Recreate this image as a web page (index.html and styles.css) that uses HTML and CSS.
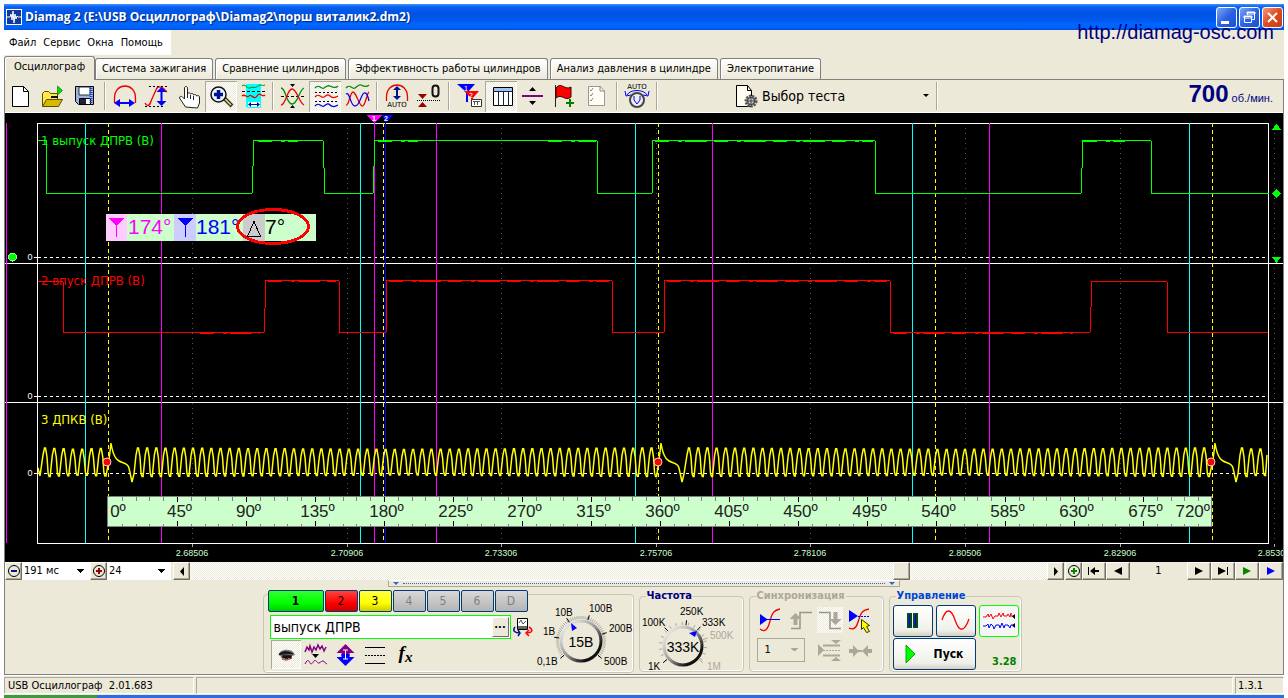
FILE: index.html
```html
<!DOCTYPE html>
<html lang="ru">
<head>
<meta charset="utf-8">
<title>Diamag 2</title>
<link rel="stylesheet" href="styles.css">
</head>
<body>
<div class="app">
  <header class="titlebar">
    <svg class="logo" width="16" height="16" viewBox="0 0 16 16"><rect width="16" height="16" fill="#fff"/><rect x="1" y="1" width="14" height="14" fill="#123a9c"/><path d="M1 8h3l1-3 1 6 1-9 1 12 1-9 1 5 1-3 1 1h3" fill="none" stroke="#fff"/></svg>
    <h1 class="title">Diamag 2 (E:\USB Осциллограф\Diamag2\порш виталик2.dm2)</h1>
    <div class="winbtns">
      <button class="winbtn" aria-label="Свернуть"><svg width="19" height="19" viewBox="0 0 19 19"><path d="M4 13h8v3H4z" fill="#fff"/></svg></button>
      <button class="winbtn" aria-label="Восстановить"><svg width="19" height="19" viewBox="0 0 19 19"><path d="M7.500 7V4.500h7v7H12M7 4h8v2H7zM4.500 8.500h7v6h-7zM4 8h8v2H4z" fill="none" stroke="#fff"/></svg></button>
      <button class="winbtn close" aria-label="Закрыть"><svg width="19" height="19" viewBox="0 0 19 19"><path d="M5 5l9 9M14 5l-9 9" stroke="#fff" stroke-width="2"/></svg></button>
    </div>
    <a class="site" href="#site">http://diamag-osc.com</a>
  </header>
  <nav class="menubar">
    <button class="menu">Файл</button><button class="menu">Сервис</button><button class="menu">Окна</button><button class="menu">Помощь</button>
  </nav>
  <div class="tabs" role="tablist">
    <button class="tab active" role="tab" aria-selected="true">Осциллограф</button>
    <button class="tab" role="tab">Система зажигания</button>
    <button class="tab" role="tab">Сравнение цилиндров</button>
    <button class="tab" role="tab">Эффективность работы цилиндров</button>
    <button class="tab" role="tab">Анализ давления в цилиндре</button>
    <button class="tab" role="tab">Электропитание</button>
  </div>
  <main class="page">
    <div class="toolbar">
      <button class="tool" aria-label="Новый"><svg viewBox="5 81 32 30"><path d="M12.500 86.500h11l5 5v15h-16z" fill="#fff" stroke="#000"/><path d="M23.500 86.500v5h5" fill="none" stroke="#000"/></svg></button>
      <button class="tool" aria-label="Открыть"><svg viewBox="37 81 32 30"><path d="M42.500 106v-12.500l2-2h4l2 2h7v12.500z" fill="#ffe94a" stroke="#5a5000"/><path d="M42.500 106.500l4-7h16l-4 7z" fill="#d8b800" stroke="#5a5000"/><path d="M51 96h7v2h-7z" fill="#111"/><path d="M57.500 86v9l5-4.500z" fill="#00e000" stroke="#006000" stroke-width=".6"/></svg></button>
      <button class="tool" aria-label="Сохранить"><svg viewBox="69 81 32 30"><path d="M75.500 86.500h18v18h-15l-3-3z" fill="#9db4dd" stroke="#000"/><path d="M79 87h11v8H79z" fill="#fff" stroke="#234"/><path d="M79.500 98.500h11v6h-11z" fill="#223" stroke="#000"/><path d="M86 99h4v5h-4z" fill="#fff"/><path d="M91 88v15" stroke="#24c" stroke-dasharray="1 1" stroke-width="3"/></svg></button>
      <span class="sep"></span>
      <button class="tool" aria-label="Развёртка"><svg viewBox="109 81 32 30"><path d="M114.500 103v-5c0-16 21-16 21 0v5" fill="none" stroke="#e00" stroke-width="1.300"/><path d="M114 103l6-4v3h9v-3l6 4-6 4v-3h-9v3z" fill="#00f"/></svg></button>
      <button class="tool" aria-label="Амплитуда"><svg viewBox="141 81 32 30"><path d="M149 86.500h18M145 106.500h20" stroke="#000" stroke-dasharray="2 2"/><path d="M145 103c2 4 5 3 6-2l5-11c1-4 5-4 8-1l3 3" fill="none" stroke="#e00" stroke-width="1.300"/><path d="M161.500 87l5 5h-4v9h4l-5 5-5-5h4v-9h-4z" fill="#00f"/></svg></button>
      <button class="tool" aria-label="Рука"><svg viewBox="173 81 32 30"><path d="M185.500 107l-6-9c0-2 2-2 3-1l2 2v-11c0-2 3-2 3 0v6c1-2 3-1 3 0 2-1 3 0 3 1 2-1 3 0 3 1 2-1 3 0 3 1v6l-2 5z" fill="#fff" stroke="#222"/><path d="M187.500 94v4M190.500 95v4M193.500 96v4" stroke="#222"/></svg></button>
      <button class="tool pressed" aria-label="Лупа"><svg viewBox="205 81 32 30"><path d="M223 97l9 9" stroke="#333" stroke-width="4"/><path d="M223 97l8 8" stroke="#ffe060" stroke-width="1.500"/><circle cx="218.500" cy="94.500" r="7.500" fill="#eef4ff" stroke="#111" stroke-width="1.500"/><path d="M214 94.500h9M218.500 90v9" stroke="#00138f" stroke-width="3.500"/></svg></button>
      <button class="tool" aria-label="Область"><svg viewBox="237 81 32 30"><path d="M246 84h15v23h-15z" fill="#0ff"/><path d="M247.500 101.500h13v6h-13z" fill="#fff" stroke="#0ff"/><path d="M242 86c3-3 5 3 8 2l3-1c3 2 5-2 7-2s3 1 5 0" fill="none" stroke="#080"/><path d="M242 91.500h23" stroke="#000" stroke-dasharray="3 2"/><path d="M242 96c3-3 5 3 7 0s5 5 8 0 5 2 8-1" fill="none" stroke="#e00" stroke-width="1.300"/><path d="M248 104.500l3-2.500v2h6v-2l3 2.500-3 2.500v-2h-6v2z" fill="#00138f"/></svg></button>
      <span class="sep"></span>
      <button class="tool" aria-label="Перекрытие"><svg viewBox="277 81 32 30"><path d="M281 96.500h23" stroke="#000" stroke-dasharray="3 2"/><path d="M281 88c5 0 5 16 11 16s7-14 12-16" fill="none" stroke="#080" stroke-width="1.300"/><path d="M281 105c5 0 6-16 11-16s7 14 12 16" fill="none" stroke="#e00" stroke-width="1.300"/><path d="M290 84h5l-2.500 3zM290 108h5l-2.500-3z"/></svg></button>
      <button class="tool pressed" aria-label="Раздельно"><svg viewBox="309 81 32 30"><path d="M315 88c4-5 6 2 9 0s4-3 6-2 5 3 8 0" fill="none" stroke="#080" stroke-width="1.300"/><path d="M315 92.500h23M315 101.500h23" stroke="#000" stroke-dasharray="2 2"/><path d="M315 97c4-5 6 2 9 0s4-3 6-1 5 2 8 0" fill="none" stroke="#e00" stroke-width="1.300"/><path d="M315 106c4-5 6 2 9 0s4-3 6-1 5 2 8 0" fill="none" stroke="#00e" stroke-width="1.300"/></svg></button>
      <button class="tool" aria-label="Наложить"><svg viewBox="341 81 32 30"><path d="M346 88c4-5 6 2 9 0s4-4 6-3 5 3 8 0" fill="none" stroke="#080" stroke-width="1.300"/><path d="M346 105c3 1 4-13 7-13s6 13 9 14 5-13 7-14" fill="none" stroke="#e00" stroke-width="1.300"/><path d="M346 94c4-3 4 12 9 12s6-12 9-13 4 4 5 8" fill="none" stroke="#00e" stroke-width="1.300"/></svg></button>
      <span class="sep"></span>
      <button class="tool" aria-label="Авто"><svg viewBox="381 81 32 30"><path d="M386.500 101v-4c0-16 21-16 21 0v4" fill="none" stroke="#e00" stroke-width="1.300"/><path d="M397 86l4 4h-3v6h3l-4 4-4-4h3v-6h-3z" fill="#00138f"/><text x="397" y="107" class="mini" text-anchor="middle">AUTO</text></svg></button>
      <button class="tool" aria-label="Ноль"><svg viewBox="413 81 32 30"><path d="M418 94h9l-4.500 5zM418 107h9l-4.500-5z" fill="#900"/><path d="M417 100.500h23" stroke="#000" stroke-dasharray="1 1"/><rect x="432.500" y="85.500" width="6" height="11" rx="3" fill="none" stroke="#111" stroke-width="2"/></svg></button>
      <span class="sep"></span>
      <button class="tool" aria-label="Маркеры"><svg viewBox="453 81 32 30"><path d="M457 84h18l-7 8v10h-2v-10z" fill="#00f"/><path d="M464 91h15l-6 7v5h-2v-5z" fill="#f00"/><text x="466" y="91" class="mini light" text-anchor="middle">1</text><text x="471" y="98" class="mini light" text-anchor="middle">2</text><path d="M471.500 99.500h10v7h-10z" fill="#fff" stroke="#333"/><path d="M473 101.500h7M474.500 101v4M477.500 101v4" stroke="#555"/></svg></button>
      <button class="tool pressed" aria-label="Таблица"><svg viewBox="485 81 32 30"><path d="M493.500 87.500h19v18h-19z" fill="#fff" stroke="#000"/><path d="M494 88h18v3h-18z" fill="#a0c4f0"/><path d="M493 91.500h20M498.500 92v14M503.500 92v14M508.500 92v14" stroke="#123"/></svg></button>
      <button class="tool" aria-label="Разделить"><svg viewBox="517 81 32 30"><path d="M522 96h21" stroke="#800080" stroke-width="2"/><path d="M529 91h7l-3.500-4zM529 101h7l-3.500 4z"/></svg></button>
      <button class="tool" aria-label="Флаг"><svg viewBox="549 81 32 30"><path d="M555.500 85v22" stroke="#222"/><path d="M556 88c5-7 9 3 15-1v10c-6 5-9-4-15 1z" fill="#f00" stroke="#400"/><path d="M566 103h8M570 99v8" stroke="#008000" stroke-width="2"/></svg></button>
      <button class="tool" aria-label="Список"><svg viewBox="581 81 32 30"><path d="M588.500 86.500h12l4 5v14h-16z" fill="#fffdf4" stroke="#999"/><path d="M600 86v5h5M590 90l1 1 2-3M590 95l1 1 2-3M590 100l1 1 2-3" fill="none" stroke="#888"/></svg></button>
      <span class="sep"></span>
      <button class="tool" aria-label="Авто напряжение"><svg viewBox="621 81 32 30"><text x="637" y="89" class="mini" text-anchor="middle">AUTO</text><path d="M627 95c3-6 17-6 20 0M625 91l1 5 5-1M649 91l-1 5-5-1" fill="none" stroke="#00f"/><circle cx="637" cy="100" r="7" fill="#eee" stroke="#444" stroke-width="2"/><path d="M634 96v4l3 4 3-4v-4" fill="none" stroke="#00f"/></svg></button>
      <span class="sep"></span>
      <label class="testpick">
        <svg width="26" height="30" viewBox="734 81 26 30"><path d="M737.500 85.500h11l4 5v16h-15z" fill="#fffdf0" stroke="#000"/><path d="M748.500 85.500v5h4" fill="none" stroke="#000"/><circle cx="752" cy="101" r="5" fill="#aaa" stroke="#555" stroke-width="3" stroke-dasharray="2 1"/><circle cx="752" cy="101" r="3.500" fill="#ccc" stroke="#333"/><path d="M748 101h8M752 97v8" stroke="#444"/></svg>
        <select class="picklist" aria-label="Выбор теста"><option>Выбор теста</option></select>
        <svg width="7" height="4" viewBox="0 0 7 4"><path d="M1 0h6L4 3z"/></svg>
      </label>
      <span class="sep"></span>
      <output class="rpm"><b>700</b> об./мин.</output>
    </div>

    <svg class="scope" viewBox="5 113 1278 449" role="img" aria-label="Осциллограмма">
      <g id="grid"></g>
      <path d="M38 257.500H1268M38 396.500H1268M38 473.500H1268" stroke="#fff" stroke-dasharray="3 3"/>
      <g stroke="#fff" fill="none"><path d="M37.500 543.500v-420h1231v420zM5 263.500h1278M5 402.500h1278M34 257.500h4M34 396.500h4M34 473.500h4"/></g>
      <g id="verticals"></g>
      <g class="wave">
        <path stroke="#0f0" d="M38 140.500h8v53h206l1-27 1-26h69l1 27 1 26h48l1-27 1-26h222l1 53h54l1-53h222l1 53h205l1-25 1-28h68l1 53h117"/>
        <path stroke="#0f0" stroke-dasharray="14 9 4 3 22 7" d="M258 141.500h40M378 141.500h40M548 141.500h48M655 141.500h218M1083 141.500h42"/>
        <path stroke="red" d="M38 281.500h25l1 51h200l1-24 1-28h73l1 52h46l1-52h225l1 52h51l1-52h225l1 52h199l1-25 1-26h75l1 51h100"/>
        <path stroke="red" stroke-dasharray="14 9 4 3 22 7" d="M268 281.500h68M389 281.500h220M667 281.500h220M1094 281.500h60M200 333.500h60M893 333.500h180"/>
        <path id="crank" stroke="#ff0"/>
      </g>
      <g class="chname"><text x="41" y="145" fill="#0f0">1 выпуск ДПРВ (В)</text><text x="41" y="285" fill="red">2 впуск ДПРВ (В)</text><text x="41" y="424" fill="#ff0">3 ДПКВ (В)</text></g>
      <g class="axis"><text x="30" y="260">0</text><text x="30" y="399">0</text><text x="30" y="476">0</text></g>
      <g id="times" class="axis times"></g>
      <g class="dots" stroke="#fcc" fill="red"><circle cx="107" cy="462" r="4"/><circle cx="658" cy="462" r="4"/><circle cx="1211" cy="462" r="4"/></g>
      <g id="ruler"></g>
      <path d="M367 115h15l-7.500 8z" fill="#f0f"/><path d="M382 115h11l-7 8z" fill="#00f"/>
      <text x="374" y="121" class="flag">1</text><text x="386" y="121" class="flag">2</text>
      <g fill="#0f0"><path d="M1272 130h9l-4.500-6.500zM1276.500 189l4.500 4.500-4.500 4.500-4.500-4.500zM1272 257h9l-4.500 6z"/><circle cx="12.500" cy="257" r="4" stroke="#8f8"/></g>
      <path d="M106 214h210v27H106z" fill="#cfc"/>
      <path d="M106 214h21v27h-21z" fill="#fcf"/><path d="M174 214h22v27h-22z" fill="#ccf"/><path d="M243 214h22v27h-22z" fill="#ccc"/>
      <path d="M109 218h15l-7 8v11h-1v-11z" fill="#f0f"/><path d="M178 218h15l-7 8v11h-1v-11z" fill="#00f"/><path d="M247.500 236.500h13l-6.500-15z" fill="none" stroke="#000"/>
      <g class="measure"><text x="128" y="234" fill="#f0f">174°</text><text x="196" y="234" fill="#00f">181°</text><text x="265" y="234">7°</text></g>
      <ellipse cx="273" cy="226.500" rx="35.500" ry="17" fill="none" stroke="red" stroke-width="3"/>
    </svg>

    <div class="scroller">
      <button class="flat" aria-label="Сжать"><svg width="14" height="14" viewBox="0 0 14 14"><circle cx="7" cy="7" r="5.500" fill="none" stroke="#000"/><path d="M4 7h6" stroke="#00138f" stroke-width="2"/></svg></button>
      <select class="mini-select" aria-label="Время"><option>191 мс</option></select>
      <button class="flat" aria-label="Растянуть"><svg width="14" height="14" viewBox="0 0 14 14"><circle cx="7" cy="7" r="5.500" fill="none" stroke="#000"/><path d="M4 7h6M7 4v6" stroke="#900" stroke-width="2"/></svg></button>
      <select class="mini-select second" aria-label="Масштаб"><option>24</option></select>
      <button class="flat" aria-label="Влево"><svg width="8" height="9" viewBox="0 0 8 9"><path d="M6 0v9L2 4.500z"/></svg></button>
      <input class="track" type="range" min="0" max="1000" value="837" aria-label="Позиция">
      <button class="flat" aria-label="Вправо"><svg width="8" height="9" viewBox="0 0 8 9"><path d="M2 0v9l4-4.500z"/></svg></button>
      <button class="flat add" aria-label="Добавить"><svg width="14" height="14" viewBox="0 0 14 14"><circle cx="7" cy="7" r="5.500" fill="none" stroke="#000"/><path d="M4 7h6M7 4v6" stroke="#080" stroke-width="2"/></svg></button>
      <button class="nav" aria-label="В начало"><svg width="12" height="8" viewBox="0 0 12 8"><path d="M0 0h1v8H0zM2 4l5-4v3h4v2H7v3z"/></svg></button>
      <button class="nav" aria-label="Назад"><svg width="12" height="8" viewBox="0 0 12 8"><path d="M2 4l8-4v8z"/></svg></button>
      <output class="frame">1</output>
      <button class="nav" aria-label="Вперёд"><svg width="12" height="8" viewBox="0 0 12 8"><path d="M10 4L2 0v8z"/></svg></button>
      <button class="nav" aria-label="В конец"><svg width="12" height="8" viewBox="0 0 12 8"><path d="M9 4L1 0v8zM10 0h1v8h-1z"/></svg></button>
      <button class="nav" aria-label="Проиграть"><svg width="12" height="8" viewBox="0 0 12 8"><path d="M10 4L2 0v8z" fill="#080"/></svg></button>
      <button class="nav" aria-label="Проиграть всё"><svg width="12" height="8" viewBox="0 0 12 8"><path d="M10 4L2 0v8z" fill="#00f"/></svg></button>
    </div>

    <div class="panel">
      <div class="splitter"><i></i><span></span><i></i></div>
      <div class="groups">
        <section class="group input-group">
          <div class="channel">
            <div class="chbtns">
              <button class="ch ch1">1</button><button class="ch ch2">2</button><button class="ch ch3">3</button><button class="ch" disabled>4</button><button class="ch" disabled>5</button><button class="ch" disabled>6</button><button class="ch" disabled>D</button>
            </div>
            <div class="namerow">
              <div class="namebox"><input class="name" type="text" value="выпуск ДПРВ" aria-label="Имя канала"><button class="more" aria-label="Ещё">...</button></div>
              <button class="ico" aria-label="Заменить"><svg width="20" height="20" viewBox="512 616 20 20"><path d="M516.500 617.500h10v11h-10z" fill="#fff" stroke="#000"/><path d="M517 625h9v3h-9z" fill="#666"/><path d="M518 622l2-3 2 4 3-3" fill="none" stroke="#555"/><path d="M514 626c-3 4 0 6 5 6M517 629l2 3-2 3" fill="none" stroke="#00138f" stroke-width="1.500"/><path d="M528 626c5 3 3 6-3 6M528 629l-3 3 3 3" fill="none" stroke="red" stroke-width="1.500"/></svg></button>
            </div>
            <div class="icons">
              <button class="ico on" aria-label="Показать"><svg width="30" height="28" viewBox="270 640 30 28"><path d="M278 653c1-5 12-6 15-1l1 2-3 1c-2 6-9 6-11 1z" fill="#777"/><path d="M278 654c3-4 9-4 14-1M282 655h8v2h-8z" fill="#222" stroke="#111" stroke-width="1.300"/><path d="M281 658h3M287 658h2" stroke="#c66" stroke-width="2"/></svg></button>
              <button class="ico" aria-label="Фильтр"><svg width="30" height="28" viewBox="300 640 30 28"><path d="M304 651l2-5 2 3 1-4 2 6 2-5 2 3 2-5 2 4 2-3 2 5 2-4" fill="none" stroke="#800080" stroke-width="1.500"/><path d="M311 653h7l-3.500 4z"/><path d="M304 663c3-6 4-3 5-1s3 0 4-2 3 1 4 2 3-2 5-2 1 2 4 3" fill="none" stroke="#800080"/></svg></button>
              <button class="ico" aria-label="Инверсия"><svg width="30" height="28" viewBox="330 640 30 28"><path d="M344.500 643l9 9h-5v3h-8v-3h-5z" fill="#800080"/><path d="M344.500 665l9-9h-5v-3h-8v3h-5z" fill="#00f"/><path d="M342 649h5M344.500 649v9M342 658h5" stroke="#fff"/></svg></button>
              <button class="ico" aria-label="Уровни"><svg width="30" height="28" viewBox="360 640 30 28"><path d="M364 646.500h20M364 662.500h20" stroke="#000"/><path d="M364 654.500h20" stroke="#000" stroke-dasharray="2 1"/></svg></button>
              <button class="ico fx" aria-label="Формула"><i>f<sub>x</sub></i></button>
            </div>
          </div>
          <svg id="knobV" class="knob" width="98" height="76" viewBox="534 594 98 76"></svg>
        </section>
        <fieldset class="group freq"><legend>Частота</legend>
          <svg id="knobF" class="knob" width="98" height="70" viewBox="641 600 98 70"></svg>
        </fieldset>
        <fieldset class="group sync"><legend>Синхронизация</legend>
          <div class="syncrow">
            <button class="ico" aria-label="Уровень"><svg width="26" height="26" viewBox="757 606 26 26"><path d="M760 628c5 4 8 0 10-8s4-11 10-12" fill="none" stroke="#e00" stroke-width="1.300"/><path d="M760 613l7 5h13v1h-13l-7 5z" fill="#00f"/></svg></button>
            <button class="ico" aria-label="Фронт"><svg width="26" height="26" viewBox="787 606 26 26"><path d="M791 627.500h9v-16h12" fill="none" stroke="#999684" stroke-width="1.500"/><path d="M795.500 612l6 6h-4v6h-4v-6h-4z" fill="#aca899"/></svg></button>
            <button class="ico hatch" aria-label="Спад"><svg width="26" height="26" viewBox="818 606 26 26"><path d="M820 611.500h11v16h11" fill="none" stroke="#999684" stroke-width="1.500"/><path d="M836.500 624l-6-6h4v-7h4v7h4z" fill="#aca899"/></svg></button>
            <button class="ico" aria-label="Ручной"><svg width="26" height="26" viewBox="848 606 26 26"><path d="M850 627c6 3 8-2 10-9s4-9 10-10" fill="none" stroke="#e00" stroke-width="1.300"/><path d="M850 609l9 6-9 6z" fill="#00f"/><path d="M859 615.500h12" stroke="#00f" stroke-dasharray="2 1"/><path d="M862.500 618.500l8 6-3 1 3 5-3 1-3-5-2 2z" fill="#ff0" stroke="#330"/></svg></button>
          </div>
          <div class="syncrow lower">
            <select class="syncsel" disabled aria-label="Канал синхронизации"><option>1</option></select>
            <button class="ico" disabled aria-label="Гистерезис"><svg width="26" height="26" viewBox="815 639 26 26"><path d="M817 645l6 6-6 6zM830 641h10l-5 4zM830 662h10l-5-4z" fill="#aca899"/><path d="M822 646.500h17M822 656.500h17" stroke="#aca899" stroke-width="2"/><path d="M822 651.500h17" stroke="#aca899" stroke-dasharray="2 1"/></svg></button>
            <button class="ico" disabled aria-label="Центр"><svg width="26" height="26" viewBox="844 639 26 26"><path d="M846 650h4v-4l6 6-6 6v-4h-4zM869 650h-4v-4l-6 6 6 6v-4h4zM855 651h5v2h-5z" fill="#aca899"/></svg></button>
          </div>
        </fieldset>
        <fieldset class="group control"><legend>Управление</legend>
          <div class="ctlgrid">
            <button class="ctl" aria-label="Пауза"><svg width="14" height="18" viewBox="0 0 14 18"><path d="M2 2h3v13H2zM8 2h3v13H8z" fill="#00f" stroke="#064a20" stroke-width="2"/></svg></button>
            <button class="ctl" aria-label="Синус"><svg width="30" height="22" viewBox="0 0 30 22"><path d="M1 10C5-2 10-2 14 10s9 13 14-1" fill="none" stroke="red" stroke-width="1.300"/></svg></button>
            <button class="ctl sel" aria-label="Поток"><svg width="34" height="22" viewBox="0 0 34 22"><path d="M1 7h3l2-3 1 3 2-3 2 5 2-3h3l1-3 2 4 2-4 1 3h3l1-2 2 3 1-4v3h3" fill="none" stroke="red"/><path d="M1 16h3l2-2 1 4 2-4 2 2 1 3 2-4h3l1 3 2-5 2 5 1-3h3l2 3 1-3h4" fill="none" stroke="#00f"/><path d="M33 4v5l-3-2.500zM33 13v5l-3-2.500z" fill="#003"/></svg></button>
            <button class="ctl start"><svg width="11" height="20" viewBox="0 0 11 20"><path d="M1 1v18l9-9z" fill="#0f0" stroke="#0a0"/></svg>Пуск</button>
            <output class="speed">3.28</output>
          </div>
        </fieldset>
      </div>
    </div>
  </main>
  <footer class="status"><span class="cell dev">USB Осциллограф&nbsp; 2.01.683</span><span class="cell wide"></span><span class="cell ver">1.3.1</span></footer>
  <div class="taskbar"></div>
</div>
<script src="scope.js"></script>
</body>
</html>
```
FILE: styles.css
```css
* { box-sizing: border-box; }
body { margin: 0; padding: 4px 4px 0; background: #fff; font: 11px/14px "DejaVu Sans Condensed", "Open Sans", sans-serif; color: #000; }
button, select, input { font: inherit; color: inherit; margin: 0; padding: 0; border: 0; background: none; border-radius: 0; }
select { appearance: none; opacity: 1; }
svg { display: block; flex: none; }
.app { background: #ece9d8; }

.titlebar { position: relative; display: flex; align-items: center; height: 26px; padding: 0 1px 0 2px; gap: 3px; background: linear-gradient(#3a93ff, #0a5ef0 3px, #0054e3 10px, #0058ee 16px, #0066ff 20px, #0060f8 24px, #0050d8); }
.title { flex: 1; margin: 0; font: bold 12px/18px "Open Sans", sans-serif; color: #fff; text-shadow: 1px 1px 1px #002a80; white-space: nowrap; }
.winbtns { display: flex; gap: 2px; }
.winbtn { width: 21px; height: 21px; border: 1px solid #fff; border-radius: 3px; background: linear-gradient(135deg, #7fa8f8, #2c62e4 50%, #1a4fd0); }
.winbtn.close { background: linear-gradient(135deg, #f09a80, #e04a20 50%, #c83c10); }
.site { position: absolute; right: 10px; top: 16px; font: 20px/24px "Liberation Sans", Arial, sans-serif; color: #000080; text-decoration: none; }

.menubar { display: inline-flex; height: 25px; padding: 0 8px 0 5px; gap: 7px; background: #fff; vertical-align: top; }
.tabs { display: flex; align-items: flex-end; height: 25px; gap: 2px; border-bottom: 1px solid #808080; }
.tab { height: 21px; padding: 0 6px; border: 1px solid #808080; border-bottom: 0; border-radius: 3px 3px 0 0; background: linear-gradient(#fff, #ece9d8); box-shadow: inset 1px 1px #fff; white-space: nowrap; }
.tab.active { height: 24px; margin: 0 -2px -1px 0; padding: 0 9px 3px; background: #ece9d8; }

.page { border: solid #808080; border-width: 0 1px; }
.toolbar { display: flex; align-items: center; height: 33px; border-bottom: 1px solid #fff; }
.tool { flex: none; width: 32px; height: 31px; }
.tool svg { width: 32px; height: 30px; }
.pressed, .ico.on, .hatch { background: repeating-conic-gradient(#fff 0 25%, #ece9d8 0 50%) 0 0 / 2px 2px; }
.pressed, .ico.on { box-shadow: inset 1px 1px #aca899, inset -1px -1px #fff; }
.sep { flex: none; width: 2px; height: 28px; margin: 0 3px; border-left: 1px solid #aca899; border-right: 1px solid #fff; }
.mini { font: 7px "DejaVu Sans", sans-serif; }
.light { fill: #fff; }
.testpick { display: flex; align-items: center; width: 200px; margin-left: 72px; gap: 3px; padding-right: 4px; }
.picklist { flex: 1; font: 14px/18px "DejaVu Sans Condensed", sans-serif; }
.rpm { margin-left: auto; padding-right: 10px; font: 11px/24px "Liberation Sans", sans-serif; color: #000080; white-space: nowrap; }
.rpm b { font-size: 24px; }

.scope { width: 100%; height: auto; background: #000; shape-rendering: crispEdges; }
.wave path { fill: none; stroke-width: 1; }
#crank { stroke-width: 1.500; shape-rendering: auto; }
.dots { shape-rendering: auto; }
.chname { font: 13px "DejaVu Sans Condensed", sans-serif; }
.axis { font: 9px "Liberation Sans", sans-serif; fill: #fff; text-anchor: middle; }
.times { fill: #cfc; }
.flag { font: bold 7px "Liberation Sans", sans-serif; fill: #fff; text-anchor: middle; }
.measure { font: 21px "Liberation Sans", sans-serif; }
.degrees { font: 17px "Liberation Sans", sans-serif; fill: #222; text-anchor: middle; }
.degrees .last { text-anchor: end; }

.scroller { display: flex; height: 18px; }
.flat, .nav { display: flex; flex: none; align-items: center; justify-content: center; width: 17px; height: 18px; background: #ece9d8; border: 1px solid; border-color: #fff #716f64 #716f64 #fff; box-shadow: inset -1px -1px #aca899; }
.nav { width: 24px; }
.add { margin-left: 1px; }
.mini-select { width: 68px; padding: 0 2px; background: linear-gradient(#000, #000) right 6px top 7px / 7px 1px no-repeat, linear-gradient(#000, #000) right 7px top 8px / 5px 1px no-repeat, linear-gradient(#000, #000) right 8px top 9px / 3px 1px no-repeat, linear-gradient(#000, #000) right 9px top 10px / 1px 1px no-repeat, #fff; }
.second { width: 64px; margin-right: 2px; }
.track { flex: 1; min-width: 0; height: 18px; appearance: none; background: repeating-conic-gradient(#fff 0 25%, #ece9d8 0 50%) 0 0 / 2px 2px; }
.track::-webkit-slider-thumb { appearance: none; width: 17px; height: 18px; background: #ece9d8; border: 1px solid; border-color: #fff #716f64 #716f64 #fff; box-shadow: inset -1px -1px #aca899; }
.frame { width: 57px; text-align: center; line-height: 18px; }

.panel { padding-bottom: 1px; }
.splitter { display: flex; align-items: center; gap: 4px; width: 40%; height: 7px; margin: 0 auto; padding: 0 4px; border: 1px solid #aca899; border-top-color: #fff; }
.splitter span { flex: 1; border-top: 1px dotted #316ac5; }
.splitter i { border: solid transparent; border-width: 3px 3px 0; border-top-color: #316ac5; }
.groups { display: flex; justify-content: center; gap: 5px; margin-top: 2px; padding-right: 4px; }
.group { min-width: 0; height: 83px; margin: 0; padding: 0; border: 1px solid #c9c6b5; border-radius: 4px; box-shadow: inset -1px -1px #fff; }
.group legend { margin-left: 6px; padding: 0 1px; font: bold 11px/14px "DejaVu Sans Condensed", sans-serif; }
.input-group { display: flex; height: 79px; width: 371px; margin-top: 5px; }
.channel { width: 271px; margin-top: -5px; padding-left: 4px; }
.knob { flex: none; font: 10px "Liberation Sans", sans-serif; }
.knob .value { font-size: 14px; text-anchor: middle; }
.freq { width: 105px; }
.freq legend { color: #000080; }
.chbtns { display: flex; height: 22px; gap: 1px; }
.ch { width: 33px; height: 22px; border: 1px solid #003c74; border-radius: 2px; background: linear-gradient(#d8d8d8, #b4b4b4); font: 12px/18px "DejaVu Sans Condensed", sans-serif; }
.ch:disabled { color: #808080; }
.ch1 { width: 56px; background: linear-gradient(#3f3, #0f0 60%, #0c0); font-weight: bold; }
.ch2 { background: linear-gradient(#f44, #f00 60%, #c00); }
.ch3 { background: linear-gradient(#ff4, #ff0 60%, #cc0); }
.namerow { display: flex; align-items: center; gap: 2px; margin: 3px 0 1px 2px; }
.namebox { display: flex; width: 241px; height: 24px; padding: 1px; border: 1px solid #0f0; background: #fff; }
.name { flex: 1; min-width: 0; padding: 0 2px; font: 14px/18px "DejaVu Sans Condensed", sans-serif; outline: 0; }
.more { width: 17px; font-weight: bold; line-height: 12px; padding-bottom: 5px; background: #ece9d8; border: 1px solid; border-color: #fff #716f64 #716f64 #fff; }
.icons { display: flex; margin-left: 3px; }
.icons .ico { width: 30px; height: 29px; }
.fx { font: bold 19px/20px "Liberation Serif", serif; }
.fx sub { font-size: 15px; vertical-align: -3px; }
.sync { width: 135px; }
.sync legend { color: #aca899; }
.syncrow { display: flex; gap: 4px; margin: 4px 0 0 7px; }
.lower { gap: 5px; margin-top: 5px; }
.syncsel { width: 48px; height: 24px; margin-right: 6px; padding: 0 7px; border: 1px solid #aca899; background: linear-gradient(#aca899, #aca899) right 6px top 9px / 7px 1px no-repeat, linear-gradient(#aca899, #aca899) right 7px top 10px / 5px 1px no-repeat, linear-gradient(#aca899, #aca899) right 8px top 11px / 3px 1px no-repeat; }
.control { width: 133px; }
.control legend { color: #0046d5; }
.ctlgrid { display: grid; grid-template-columns: 40px 40px 40px; gap: 1px 3px; margin: 2px 0 0 3px; }
.ctl { display: flex; align-items: center; justify-content: center; height: 32px; border: 1px solid #003c74; border-radius: 3px; background: linear-gradient(#fff, #f0f0ea 80%, #d6d0c5); }
.ctl.sel { border-color: #0f0; background: #f6f6f6; }
.start { grid-column: span 2; gap: 18px; font: bold 12px/16px "DejaVu Sans Condensed", sans-serif; }
.speed { align-self: end; justify-self: end; padding: 0 2px 1px 0; font: bold 11px/14px "DejaVu Sans Condensed", sans-serif; color: #008000; }

.status { display: flex; gap: 2px; padding: 2px 0 1px; border-top: 1px solid #808080; box-shadow: inset 0 1px #fff; }
.cell { height: 17px; padding: 1px 3px; border: 1px solid; border-color: #aca899 #fff #fff #aca899; }
.dev { width: 190px; }
.wide { flex: 1; }
.ver { width: 49px; padding-left: 2px; }
.taskbar { height: 4px; background: linear-gradient(90deg, #3c9a3c 93px, #2a6ee0 93px); }
```
FILE: scope.js
```js
const NS = "http://www.w3.org/2000/svg";
function add(parent, tag, attrs, text) {
  const el = document.createElementNS(NS, tag);
  for (const k in attrs) el.setAttribute(k, attrs[k]);
  if (text !== undefined) el.textContent = text;
  parent.appendChild(el);
  return el;
}
const byId = id => document.getElementById(id);

// Time grid
const times = ["2.68506", "2.70906", "2.73306", "2.75706", "2.78106", "2.80506", "2.82906", "2.85306"];
times.forEach((t, i) => {
  const x = Math.round(192 + i * 154.6);
  add(byId("grid"), "path", { d: `M${x + .5} 128V543`, stroke: "#555", "stroke-dasharray": "1 4" });
  add(byId("grid"), "path", { d: `M${x + .5} 544v3`, stroke: "#aaa" });
  add(byId("times"), "text", { x, y: 556 }, t);
});

// Phase lines and cursors
const lines = {
  "#0ff": [85, 360, 635, 912, 1189],
  "#f0f": [6, 161, 374, 436, 712, 989],
  "#00f": [385]
};
for (const c in lines) lines[c].forEach(x => add(byId("verticals"), "path", { d: `M${x + .5} 123V543`, stroke: c }));
[108, 383, 658, 935, 1212].forEach(x => add(byId("verticals"), "path", { d: `M${x + .5} 123V543`, stroke: "#ff0", "stroke-dasharray": "4 3" }));

// Crankshaft sensor: evenly spaced teeth with a two-tooth gap at every turn
function teeth(from, count, step) {
  let d = "";
  for (let i = 0; i < count; i++) {
    const x = from + i * step, edge = Math.abs(i / count - .5) * 3;
    const top = 449.500 - edge, low = 475 + edge, h = step / 2;
    d += `L${x - 2} ${top + 7}L${x - .5} ${top}L${x + .5} ${top}L${x + 2} ${top + 9}L${x + h - 1.5} ${low - 3}L${x + h - .5} ${low}L${x + h + .5} ${low}`;
  }
  return d;
}
const gap = r => `L${r + 1} 460L${r + 3} 443C${r + 7} 470 ${r + 18} 458 ${r + 21} 468L${r + 24} 482L${r + 26} 474`;
byId("crank").setAttribute("d", "M38 468L40 476" + teeth(45, 7, 9.3) + gap(108) + teeth(138, 57, 9.17) + gap(658) + teeth(689, 57, 9.2) + gap(1212) + teeth(1242, 3, 9.2) + "L1267 455");

// Angle ruler
const ruler = byId("ruler");
add(ruler, "rect", { x: 107.5, y: 496.5, width: 1104, height: 30, fill: "#cfc", stroke: "#808080" });
const labels = add(ruler, "g", { class: "degrees" });
for (let i = 1; i < 80; i++) {
  const x = Math.round(108 + i * 13.8) + .5, major = i % 5 === 0, n = major ? 5 : 4;
  add(ruler, "path", { d: `M${x} 497v${n}M${x} 526v-${major ? 5 : 2}`, stroke: major ? "#000" : "#808080" });
  if (major) add(labels, "text", { x: x + 2, y: 517 }, i * 9 + "º");
}
add(labels, "text", { x: 118, y: 517 }, "0º");
add(labels, "text", { x: 1210, y: 517, class: "last" }, "720º");

// Rotary knobs
function knob(id, cx, cy, r, value, marks, fine, pointer) {
  const s = byId(id);
  const defs = add(s, "defs", {});
  const g = add(defs, "linearGradient", { id: id + "g", x1: 0, y1: 0, x2: 1, y2: 1 });
  [["0", "#fff"], [".5", "#999"], [".8", "#111"]].forEach(([o, c]) => add(g, "stop", { offset: o, "stop-color": c }));
  const ray = (a, r1, r2, c) => {
    const t = a * Math.PI / 180, X = Math.sin(t), Y = -Math.cos(t);
    add(s, "path", { d: `M${cx + X * r1} ${cy + Y * r1}L${cx + X * r2} ${cy + Y * r2}`, stroke: c });
  };
  for (let a = -130; a <= 130; a += fine) ray(a, r + 2, r + 5, "#aca899");
  add(s, "circle", { cx, cy, r, fill: "#ece9d8", stroke: `url(#${id}g)`, "stroke-width": 3 });
  marks.forEach(([t, x, y, a, c]) => {
    ray(a, r + 2, r + 7, c || "#000");
    add(s, "text", { x, y, fill: c || "#000" }, t);
  });
  add(s, "path", { d: pointer, fill: "#00f" });
  add(s, "text", { x: cx, y: cy + 6, class: "value" }, value);
}
knob("knobV", 580, 640, 20, "15В", [["0,1В", 536, 664, -130], ["1В", 542, 634, -82], ["10В", 554, 615, -32], ["100В", 588, 611, 18], ["200В", 608, 631, 72], ["500В", 603, 664, 130]], 5, "M570 622l6 5-5 3z");
knob("knobF", 684, 643, 19, "333K", [["1K", 649, 667, -130], ["100K", 643, 623, -45], ["250K", 681, 612, 8], ["333K", 703, 623, 42], ["500K", 711, 636, 72, "#aca899"], ["1M", 708, 667, 130, "#aca899"]], 16, "M690 630l8-2-2 6z");
```
